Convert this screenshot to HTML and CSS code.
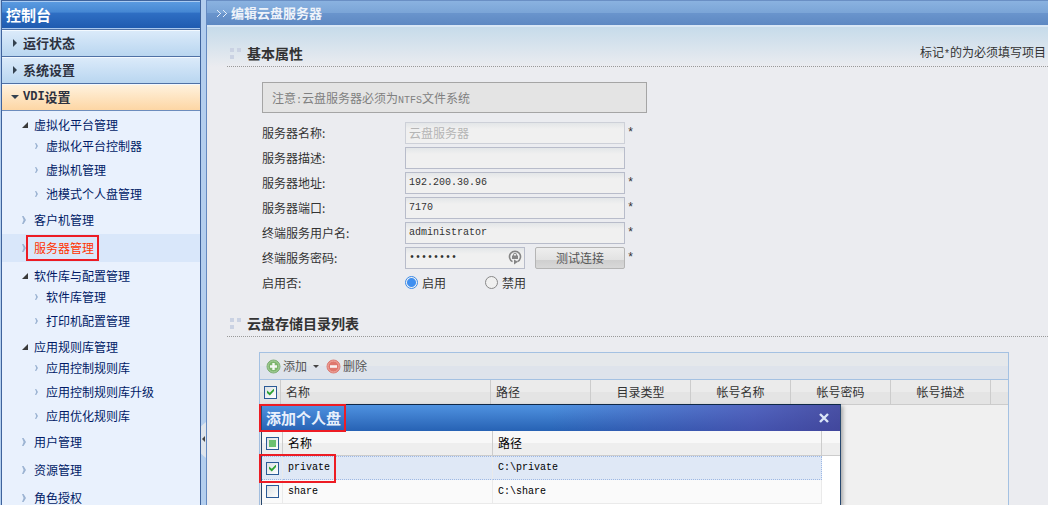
FILE: index.html
```
<!DOCTYPE html>
<html lang="zh-CN">
  <head>
    <meta charset="UTF-8" />
    <meta name="viewport" content="width=device-width, initial-scale=1.0" />
    <title>编辑云盘服务器</title>
    <link rel="stylesheet" href="styles.css">
  </head>
  <body>
    <div class="layout">
      <nav class="sidebar">
        <h1 class="sidebar-title">控制台</h1>
        <button type="button" class="group"><i class="caret"></i>运行状态</button>
        <button type="button" class="group"><i class="caret"></i>系统设置</button>
        <button type="button" class="group open"><i class="caret"></i><span class="latin">VDI</span>设置</button>
        <ul class="tree">
          <li>
            <a href="#" class="parent">虚拟化平台管理</a>
            <ul>
              <li><a href="#">虚拟化平台控制器</a></li>
              <li><a href="#">虚拟机管理</a></li>
              <li><a href="#">池模式个人盘管理</a></li>
            </ul>
          </li>
          <li><a href="#">客户机管理</a></li>
          <li><a href="#" class="active"><span class="mark">服务器管理</span></a></li>
          <li>
            <a href="#" class="parent">软件库与配置管理</a>
            <ul>
              <li><a href="#">软件库管理</a></li>
              <li><a href="#">打印机配置管理</a></li>
            </ul>
          </li>
          <li>
            <a href="#" class="parent">应用规则库管理</a>
            <ul>
              <li><a href="#">应用控制规则库</a></li>
              <li><a href="#">应用控制规则库升级</a></li>
              <li><a href="#">应用优化规则库</a></li>
            </ul>
          </li>
          <li><a href="#">用户管理</a></li>
          <li><a href="#">资源管理</a></li>
          <li><a href="#">角色授权</a></li>
        </ul>
      </nav>

      <div class="splitter">
        <button type="button" class="splitter-handle" aria-label="收起"></button>
      </div>

      <main class="content">
        <header class="page-header">
          <svg width="12" height="8" viewBox="0 0 12 8" fill="#e6effa">
            <path d="M1 1h1v1h1v1h1v1h1v1h-1v1h-1v1h-1v1h-1v-1h1v-1h1v-1h1v-1h-1v-1h-1v-1h-1z" />
            <path d="M7 1h1v1h1v1h1v1h1v1h-1v1h-1v1h-1v1h-1v-1h1v-1h1v-1h1v-1h-1v-1h-1v-1h-1z" />
          </svg>
          <h2>编辑云盘服务器</h2>
        </header>

        <section>
          <div class="section-head">
            <i class="dots"></i>
            <h3>基本属性</h3>
            <span class="hint">标记<span class="latin">*</span>的为必须填写项目</span>
          </div>
          <form class="form">
            <p class="notice">注意<span class="latin">:</span>云盘服务器必须为<span class="latin">NTFS</span>文件系统</p>
            <div class="row">
              <label for="name">服务器名称:</label>
              <input type="text" id="name" value="云盘服务器" disabled />
              <span class="star">*</span>
            </div>
            <div class="row">
              <label for="desc">服务器描述:</label>
              <input type="text" id="desc" />
            </div>
            <div class="row">
              <label for="addr">服务器地址:</label>
              <input type="text" id="addr" value="192.200.30.96" />
              <span class="star">*</span>
            </div>
            <div class="row">
              <label for="port">服务器端口:</label>
              <input type="text" id="port" value="7170" />
              <span class="star">*</span>
            </div>
            <div class="row">
              <label for="user">终端服务用户名:</label>
              <input type="text" id="user" value="administrator" />
              <span class="star">*</span>
            </div>
            <div class="row">
              <label for="pwd">终端服务密码:</label>
              <div class="password">
                <input type="password" id="pwd" value="12345678" />
                <svg width="14" height="15" viewBox="0 0 14 15">
                  <path d="M4.500 11.600A5.500 5.500 0 1 1 9.500 11.600" fill="none" stroke="#858585" stroke-width="1.600" />
                  <path d="M6 9.500l4 2.300-4 2.700z" fill="#858585" />
                  <rect x="4" y="5.500" width="6" height="3.500" fill="#858585" />
                  <path d="M5.500 6V4.700a1.500 1.500 0 0 1 3 0V6" fill="none" stroke="#858585" />
                </svg>
              </div>
              <button type="button" class="btn">测试连接</button>
              <span class="star">*</span>
            </div>
            <div class="row">
              <span class="label">启用否:</span>
              <label class="radio"><input type="radio" name="enable" checked />启用</label>
              <label class="radio"><input type="radio" name="enable" />禁用</label>
            </div>
          </form>
        </section>

        <section class="directories">
          <div class="section-head">
            <i class="dots"></i>
            <h3>云盘存储目录列表</h3>
          </div>
          <div class="grid">
            <div class="toolbar">
              <button type="button">
                <svg width="15" height="15" viewBox="0 0 15 15">
                  <circle cx="7.500" cy="7.500" r="6.500" fill="#7cb56c" stroke="#7fae76" />
                  <circle cx="7.500" cy="7.500" r="5.500" fill="none" stroke="#a9cf9d" />
                  <path d="M7.500 4v7M4 7.500h7" stroke="#f4f8f2" stroke-width="2.400" />
                </svg>
                添加
                <i class="drop"></i>
              </button>
              <button type="button">
                <svg width="15" height="15" viewBox="0 0 15 15">
                  <circle cx="7.500" cy="7.500" r="6.500" fill="#df776d" stroke="#dc7d74" />
                  <circle cx="7.500" cy="7.500" r="5.500" fill="none" stroke="#eeaaa1" />
                  <path d="M4 7.500h7" stroke="#f8f1f0" stroke-width="2.600" />
                </svg>
                删除
              </button>
            </div>
            <table class="grid-table">
              <colgroup>
                <col class="col-check" />
                <col class="col-name" />
                <col class="col-mid" />
                <col class="col-mid" />
                <col class="col-mid" />
                <col class="col-mid" />
                <col class="col-mid" />
                <col />
              </colgroup>
              <thead>
                <tr>
                  <th><input type="checkbox" aria-label="全选" checked /></th>
                  <th>名称</th>
                  <th>路径</th>
                  <th class="center">目录类型</th>
                  <th class="center">帐号名称</th>
                  <th class="center">帐号密码</th>
                  <th class="center">帐号描述</th>
                  <th></th>
                </tr>
              </thead>
            </table>

            <div class="dialog" role="dialog" aria-labelledby="dialog-title">
              <div class="dialog-header">
                <h4 id="dialog-title" class="mark-box">添加个人盘</h4>
                <button type="button" class="close" aria-label="关闭">
                  <svg width="10" height="10" viewBox="0 0 10 10">
                    <path d="M1 1l8 8M9 1l-8 8" stroke="#dbe6f7" stroke-width="2.400" />
                  </svg>
                </button>
              </div>
              <table class="dialog-table">
                <colgroup>
                  <col class="col-check" />
                  <col class="col-name" />
                  <col />
                  <col class="col-scroll" />
                </colgroup>
                <thead>
                  <tr>
                    <th><input type="checkbox" class="partial" aria-label="全选" /></th>
                    <th>名称</th>
                    <th>路径</th>
                    <th></th>
                  </tr>
                </thead>
                <tbody>
                  <tr class="selected">
                    <td><input type="checkbox" aria-label="private" checked /></td>
                    <td>private</td>
                    <td>C:\private</td>
                    <td></td>
                  </tr>
                  <tr>
                    <td><input type="checkbox" aria-label="share" /></td>
                    <td>share</td>
                    <td>C:\share</td>
                    <td></td>
                  </tr>
                </tbody>
              </table>
              <div class="row-mark"></div>
            </div>
          </div>
        </section>
      </main>
    </div>
  </body>
</html>
```
FILE: styles.css
```
* {
  margin: 0;
  padding: 0;
  box-sizing: border-box;
}

body {
  height: 100vh;
  overflow: hidden;
  background: #b3ceee;
  color: #333;
  font: 12px/18px "Noto Sans CJK SC", sans-serif;
}

button,
input {
  font: inherit;
  color: inherit;
}

button {
  border: 0;
  background: none;
}

ul {
  list-style: none;
}

a {
  color: #001a66;
  text-decoration: none;
}

.latin {
  font-family: "Liberation Mono", monospace;
  font-size: 10px;
}

.layout {
  display: flex;
  height: 100vh;
  padding-left: 1px;
}

/* Sidebar */
.sidebar {
  flex: 0 0 200px;
  border: 1px solid #3f639c;
  border-bottom: 0;
  background: #e9f1fd;
  overflow: hidden;
}

.sidebar-title {
  height: 28px;
  padding-left: 4px;
  border-top: 1px solid #a9cbf2;
  border-bottom: 1px solid #a9c8ee;
  background: linear-gradient(#5a9ae0, #4587d3 40%, #2f6fc4 41%, #1f5bb0);
  color: #fff;
  font-size: 15px;
  line-height: 26px;
}

.group {
  display: flex;
  align-items: center;
  width: 100%;
  height: 27px;
  padding-left: 9px;
  border-top: 1px solid #4f71a5;
  background: linear-gradient(#dcebfa, #b9d6f0);
  box-shadow: inset 0 1px #f3f9ff;
  color: #2c3140;
  font-size: 13px;
  font-weight: bold;
}

.group .latin {
  font-size: 12px;
}

.group.open {
  height: 28px;
  border-bottom: 1px solid #6d8dbd;
  background: linear-gradient(#fff3e0, #fdd6a4);
}

.caret {
  width: 12px;
}

.caret::before {
  content: "";
  display: block;
  width: 0;
  border: 4px solid transparent;
  border-left: 4px solid #344250;
  border-right: 0;
  margin-left: 2px;
}

.open .caret::before {
  border: 4px solid transparent;
  border-top: 4px solid #344250;
  border-bottom: 0;
  margin-left: 0;
}

.tree a {
  display: flex;
  align-items: center;
  height: 28px;
  padding-left: 20px;
}

.tree a::before {
  content: "";
  flex: none;
  width: 4px;
  height: 8px;
  margin-right: 8px;
  background: #9db4d3;
  clip-path: polygon(0 0, 40% 0, 100% 50%, 40% 100%, 0 100%, 40% 50%);
}

.tree .parent {
  height: 23px;
  padding-top: 5px;
}

.tree .parent::before {
  width: 6px;
  height: 6px;
  margin-right: 6px;
  background: #3a3a3a;
  clip-path: polygon(100% 0, 100% 100%, 0 100%);
}

.tree ul a {
  height: 24px;
  padding-left: 33px;
}

.tree ul a::before {
  width: 3px;
  height: 6px;
}

.tree .active {
  background: #d9e7fa;
  color: #ff3300;
}

.mark {
  margin-left: -8px;
  padding: 2px 3px 2px 6px;
  border: 2px solid #ed1c24;
}

.splitter {
  position: relative;
  flex: 0 0 5px;
}

.splitter-handle {
  position: absolute;
  top: 422px;
  left: 0;
  width: 5px;
  height: 36px;
  background: #dfe5ec;
  clip-path: polygon(0 12%, 100% 0, 100% 100%, 0 88%);
}

.splitter-handle::before {
  content: "";
  position: absolute;
  top: 14px;
  left: 1px;
  border: 3px solid transparent;
  border-right-color: #444;
  border-left: 0;
}

/* Main area */
.content {
  display: flex;
  flex: 1;
  flex-direction: column;
  min-width: 0;
  border-left: 1px solid #6489c0;
  background: #ebecf0 linear-gradient(#c6dbea, #ebecf0) 0 27px / 100% 40px no-repeat;
}

.page-header {
  display: flex;
  flex: none;
  align-items: center;
  gap: 3px;
  height: 27px;
  padding-left: 9px;
  border-top: 1px solid #6a8fc4;
  border-bottom: 2px solid #d9e7f5;
  background: linear-gradient(#8ab2e0, #7ba5d7 48%, #6a95cd 49%, #5d88c2);
  color: #eef3fa;
}

.page-header h2 {
  font-size: 13px;
}

.section-head {
  display: flex;
  align-items: center;
  height: 27px;
  margin: 13px 0 15px 20px;
  border-bottom: 1px dotted #999;
}

.section-head h3 {
  flex: 1;
  font-size: 14px;
}

.hint {
  padding-right: 2px;
}

/* three little squares before a section title */
.dots {
  width: 4px;
  height: 4px;
  margin: -7px 13px 0 3px;
  background: #cad2e3;
  box-shadow: 7px 0 #cad2e3, 0 7px #cad2e3;
}

.form {
  padding: 0 20px 2px 55px;
}

.notice {
  max-width: 385px;
  height: 31px;
  margin-bottom: 7px;
  padding-left: 9px;
  border: 1px solid #a5a5a5;
  background: #e4e4e4;
  color: #808080;
  line-height: 29px;
}

.row {
  display: flex;
  align-items: center;
  height: 25px;
}

.row > label:first-child,
.label {
  width: 143px;
}

input[type="text"],
input[type="password"] {
  width: 220px;
  height: 22px;
  padding: 0 3px;
  border: 1px solid #b8bcca;
  background: linear-gradient(#e3e6e8, #f0f0f0 6px);
  font-family: "Liberation Mono", monospace;
  font-size: 10px;
}

input[type="text"]:disabled {
  border-color: #cdd0d8;
  color: #b5b5b5;
  font-family: "Noto Sans CJK SC", sans-serif;
  font-size: 12px;
}

.password {
  position: relative;
  margin-right: 10px;
}

.password input {
  display: block;
  width: 120px;
}

.password svg {
  position: absolute;
  top: 3px;
  right: 3px;
}

.star {
  padding-left: 2px;
  font-family: "Liberation Mono", monospace;
}

.btn {
  width: 90px;
  height: 22px;
  border: 1px solid #b5b5b5;
  border-radius: 2px;
  background: linear-gradient(#eee, #e2e2e2 60%, #cfcfcf 61%, #d8d8d8);
  color: #555;
  line-height: 20px;
}

.radio {
  display: flex;
  align-items: center;
  width: 80px;
  gap: 4px;
}

input[type="radio"] {
  width: 13px;
  height: 13px;
  border: 1px solid #888;
  border-radius: 50%;
  appearance: none;
  background: #f0f0f0;
}

input[type="radio"]:checked {
  border-color: #3a8ae8;
  background: radial-gradient(#3f8ff0 4px, #f0f0f0 5px);
}

/* Directory list */
.directories {
  display: flex;
  flex: 1;
  flex-direction: column;
  min-height: 0;
}

.grid {
  position: relative;
  flex: 1;
  min-height: 0;
  margin: 0 39px 0 52px;
  border: 1px solid #a4c1e2;
  border-bottom: 0;
  background: #f0f0f0;
}

.toolbar {
  display: flex;
  align-items: center;
  gap: 7px;
  height: 27px;
  padding-left: 6px;
  border-bottom: 1px solid #a4c1e2;
  background: linear-gradient(#e5e8eb 50%, #dee3eb 51%);
}

.toolbar button {
  display: flex;
  align-items: center;
  gap: 2px;
  color: #555;
}

.drop {
  margin-left: 4px;
  border: 3px solid transparent;
  border-top-color: #444;
  border-bottom: 0;
}

table {
  width: 100%;
  border-collapse: separate;
  border-spacing: 0;
  table-layout: fixed;
}

th,
td {
  height: 24px;
  padding-left: 5px;
  border-right: 1px solid #ccc;
  font-weight: normal;
  text-align: left;
  white-space: nowrap;
}

th {
  height: 25px;
  border-bottom: 1px solid #ccc;
  background: linear-gradient(#ebebeb 50%, #e4e4e4 51%);
}

th:last-child,
td:last-child {
  border-right: 0;
}

th:first-child,
td:first-child {
  padding-left: 4px;
}

th.center {
  padding: 0;
  text-align: center;
}

.col-check {
  width: 21px;
}

.col-name {
  width: 210px;
}

.col-mid {
  width: 100px;
}

.col-scroll {
  width: 18px;
}

input[type="checkbox"] {
  display: block;
  width: 13px;
  height: 13px;
  border: 1px solid #2b5a96;
  appearance: none;
  background: linear-gradient(135deg, #dde1e3, #fff);
}

input[type="checkbox"]:checked::before {
  content: "";
  display: block;
  width: 7px;
  height: 7px;
  margin: 2px;
  background: #2fa336;
  clip-path: polygon(0 30%, 40% 62%, 100% 0, 100% 35%, 40% 100%, 0 65%);
}

input.partial::before {
  content: "";
  display: block;
  width: 7px;
  height: 7px;
  margin: 2px;
  background: #6cc070;
}

/* Dialog */
.dialog {
  position: absolute;
  top: 51px;
  bottom: 0;
  left: 1px;
  width: 580px;
  border: 1px solid #27486f;
  border-top-color: #0f2847;
  border-bottom: 0;
  background: #fff;
  box-shadow: 2px 2px 4px rgba(0, 0, 0, 0.3);
  color: #000;
}

.dialog-header {
  display: flex;
  align-items: center;
  justify-content: space-between;
  height: 26px;
  padding-right: 10px;
  background: linear-gradient(90deg, transparent 50%, rgba(86, 72, 170, 0.6) 85%, rgba(72, 64, 150, 0.8)),
    linear-gradient(#4f92e0, #2762b4);
}

.mark-box {
  margin-left: -3px;
  padding: 0 3px 0 5px;
  border: 2px solid #ed1c24;
  color: #e8f0fc;
  font-size: 15px;
  line-height: 24px;
}

.close {
  display: flex;
  padding: 1px;
}

.dialog-table th {
  background: linear-gradient(#f8f8f8 50%, #eee 51%);
}

.dialog-table td {
  border-right-color: #eaeaea;
  border-bottom: 1px solid #eaeaea;
  background: #fafafa;
  font-family: "Liberation Mono", monospace;
  font-size: 10px;
}

.dialog-table .selected td {
  border-top: 1px dotted #9db8e4;
  border-bottom: 1px dotted #9db8e4;
  background: #dfe8f6;
}

.dialog-table .selected td:nth-child(3) {
  border-right: 1px dotted #9db8e4;
}

.dialog-table tbody td:last-child,
.dialog-table .selected td:last-child {
  border: 0;
  background: #fff;
}

.row-mark {
  position: absolute;
  top: 49px;
  left: -3px;
  width: 77px;
  height: 29px;
  border: 2px solid #ed1c24;
}
```
